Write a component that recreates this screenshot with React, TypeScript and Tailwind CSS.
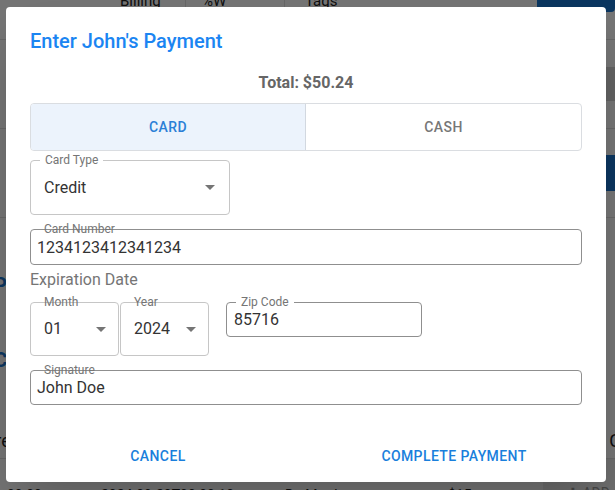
import type { ReactNode } from 'react'

const font = { fontFamily: 'Roboto, "Noto Sans", sans-serif' }

function Arrow() {
	return (
		<svg className="w-[10px] h-[5px]" viewBox="0 0 10 5" fill="#757575">
			<path d="M0 0l5 5 5-5z" />
		</svg>
	)
}

function Field({
	label,
	notch,
	className,
	children,
}: {
	label: string
	notch?: boolean
	className: string
	children: ReactNode
}) {
	return (
		<div className={`relative rounded-[4px] border ${className}`}>
			<span
				className={`absolute top-[-8px] text-[12px] leading-[14px] text-[#757575] ${notch ? 'left-[9px] bg-white px-[5px]' : 'left-[13px]'
					}`}
			>
				{label}
			</span>
			{children}
		</div>
	)
}

function Background() {
	return (
		<div className="flex flex-col text-[#222] text-[15px]">
			<div className="-mt-[16px] h-[56px] flex border-b border-[#e0e0e0]">
				<div className="w-[186px] border-r border-[#e0e0e0] pl-[120px] pt-[6px]">Billing</div>
				<div className="w-[99px] border-r border-[#e0e0e0] pl-[16px] pt-[6px]">%W</div>
				<div className="flex-1 pl-[20px] pt-[6px]">Tags</div>
				<div className="w-[78px] h-[28px] bg-[#1976d2] rounded-[4px]" />
			</div>
			<div className="h-[89px] flex items-center justify-end border-b border-[#e0e0e0]">
				<div className="h-[34px] px-[10px] bg-[#d6d6d6] text-[#888] flex items-center font-medium tracking-wide">
					ADD
				</div>
			</div>
			<div className="h-[89px] flex items-center justify-end border-b border-[#e0e0e0]">
				<div className="h-[36px] px-[10px] bg-[#1976d2] text-white flex items-center font-bold tracking-wide">
					ADD
				</div>
			</div>
			<div className="h-[241px] flex flex-col border-b border-[#e0e0e0]">
				<div className="mt-[52px] text-[20px] font-bold text-[#1976d2] -ml-[6px]">P</div>
				<div className="mt-[45px] text-[20px] font-bold text-[#1976d2] -ml-[6px]">C</div>
				<div className="mt-[52px] flex justify-between text-[18px]">
					<span className="-ml-[16px]">Pre</span>
					<span className="-mr-[6px]">C</span>
				</div>
			</div>
			<div className="h-[60px] flex items-start text-[14px] pt-[26px]">
				<span className="w-[101px] pl-[7px]">00:00</span>
				<span className="w-[184px]">2024-09-20T00:00:10</span>
				<span className="w-[163px]">Dr. Matthews</span>
				<span className="w-[95px]">$15</span>
				<div className="flex-1 -mt-[26px] h-[60px] bg-[#eeeeee] pl-[24px] pt-[24px] text-[#999]">✚ ADD</div>
			</div>
		</div>
	)
}

export default function App() {
	return (
		<div className="relative w-full h-[490px] overflow-hidden bg-white" style={font}>
			<Background />

			<div className="absolute inset-0 bg-black/[0.54] flex justify-start items-start pt-[7px] pl-[6px]">
				<div className="w-[600px] h-[475px] bg-white rounded-[4px] shadow-2xl flex flex-col">
					<h2 className="px-[24px] pt-[23px] h-[48px] text-[20px] leading-[32px] font-medium text-[#1b85f2] -mt-[7px] flex items-end pb-0">
						<span className="-mb-[9px]">Enter John's Payment</span>
					</h2>

					<div className="px-[24px] flex flex-col">
						<div className="mt-[23px] h-[24px] text-center text-[16px] leading-[24px] font-bold text-[#666]">
							Total: $50.24
						</div>

						<div className="mt-[8px] h-[48px] flex rounded-[4px] border border-[#dadde1] overflow-hidden text-[14px] font-medium tracking-[0.4px]">
							<div className="w-[275px] flex items-center justify-center bg-[#ecf3fc] text-[#2b7fd6] border-r border-[#d2d8e0]">
								CARD
							</div>
							<div className="flex-1 flex items-center justify-center text-[#777]">CASH</div>
						</div>

						<Field label="Card Type" notch className="mt-[9px] w-[200px] h-[55px] border-[#c6c6c6]">
							<div className="h-full flex items-center justify-between pl-[13px] pr-[14px] text-[16px] text-[#333]">
								<span>Credit</span>
								<Arrow />
							</div>
						</Field>

						<Field label="Card Number" className="mt-[14px] h-[36px] border-[#8f8f8f]">
							<div className="h-full flex items-center pl-[6px] pt-[1px] text-[16px] text-[#333]">
								1234123412341234
							</div>
						</Field>

						<div className="mt-[5px] h-[20px] text-[16px] leading-[20px] text-[#757575]">Expiration Date</div>

						<div className="mt-[12px] flex items-start">
							<Field label="Month" className="w-[89px] h-[54px] border-[#c6c6c6]">
								<div className="h-full flex items-center justify-between pl-[13px] pr-[12px] text-[16px] text-[#333]">
									<span>01</span>
									<Arrow />
								</div>
							</Field>
							<Field label="Year" className="ml-[1px] w-[89px] h-[54px] border-[#c6c6c6]">
								<div className="h-full flex items-center justify-between pl-[13px] pr-[12px] text-[16px] text-[#333]">
									<span>2024</span>
									<Arrow />
								</div>
							</Field>
							<Field label="Zip Code" notch className="ml-[17px] w-[196px] h-[35px] border-[#8f8f8f]">
								<div className="h-full flex items-center pl-[7px] pt-[1px] text-[16px] text-[#333]">85716</div>
							</Field>
						</div>

						<Field label="Signature" className="mt-[14px] h-[35px] border-[#8f8f8f]">
							<div className="h-full flex items-center pl-[6px] pt-[1px] text-[16px] text-[#333]">John Doe</div>
						</Field>
					</div>

					<div className="mt-[41px] flex text-[14px] font-medium tracking-[0.4px] text-[#1a7fdc]">
						<div className="w-[304px] flex justify-center">CANCEL</div>
						<div className="flex-1 flex justify-center pr-[8px]">COMPLETE PAYMENT</div>
					</div>
				</div>
			</div>
		</div>
	)
}
